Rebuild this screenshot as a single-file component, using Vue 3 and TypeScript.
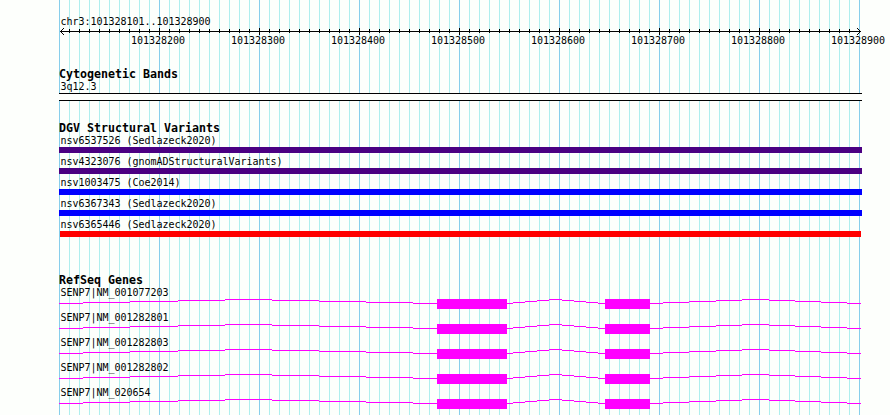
<script setup lang="ts">
interface Variant { label: string; color: string; short?: boolean }

const ticks: number[] = Array.from({ length: 79 }, (_, i) => 69 + i * 10)
const gridLines: number[] = Array.from({ length: 81 }, (_, i) => i)
const scaleLabels: string[] = Array.from({ length: 8 }, (_, i) => String(101328200 + i * 100))

const variants: Variant[] = [
  { label: 'nsv6537526 (Sedlazeck2020)', color: '#4b0082' },
  { label: 'nsv4323076 (gnomADStructuralVariants)', color: '#4b0082' },
  { label: 'nsv1003475 (Coe2014)', color: '#0000ff' },
  { label: 'nsv6367343 (Sedlazeck2020)', color: '#0000ff' },
  { label: 'nsv6365446 (Sedlazeck2020)', color: '#ff0000', short: true },
]

const genes: string[] = [
  'SENP7|NM_001077203',
  'SENP7|NM_001282801',
  'SENP7|NM_001282803',
  'SENP7|NM_001282802',
  'SENP7|NM_020654',
]

// Each intron climbs one pixel per step to its middle and back down.
const introns: number[][] = [
  [59, 83, 130, 178, 225, 272, 319, 366, 413, 437],
  [507, 513, 525, 537, 549, 562, 574, 586, 598, 605],
  [650, 663, 689, 716, 742, 769, 795, 821, 847, 861],
]
const intronPath: string = introns
  .flatMap((xs) => xs.slice(0, -1).map((x, i) => {
    const y = Math.abs(4 - i)
    return `M${x - 59} ${y}H${xs[i + 1] - 59}V${y + 1}H${x - 59}Z`
  }))
  .join('')

// Arrowheads: one pixel out from the axis for every pixel in from the tip.
const arrowPath: string = [1, 2, 3]
  .flatMap((d) => [60 + d, 860 - d].flatMap((x) => [3 - d, 3 + d].map((y) => `M${x} ${y}h1v1h-1z`)))
  .join('')
</script>

<template>
  <main class="browser">
    <svg class="grid" width="890" height="415" shape-rendering="crispEdges">
      <rect
        v-for="i in gridLines" :key="i" :x="49 + i * 10 + 10" y="0" width="1" height="415"
        :class="i % 10 === 0 ? 'major' : 'minor'"
      />
    </svg>

    <section class="scale">
      <p class="label">chr3:101328101..101328900</p>
      <svg class="axis" width="890" height="7" shape-rendering="crispEdges">
        <rect x="60" y="3" width="801" height="1" />
        <rect
          v-for="x in ticks" :key="x" :x="x" :y="(x - 59) % 100 ? 1 : 0" width="1"
          :height="(x - 59) % 100 ? 4 : 7"
        />
        <path :d="arrowPath" />
      </svg>
      <div class="numbers">
        <span v-for="n in scaleLabels" :key="n">{{ n }}</span>
      </div>
    </section>

    <section class="bands">
      <h2>Cytogenetic Bands</h2>
      <p class="label">3q12.3</p>
      <div class="band"></div>
    </section>

    <section class="variants">
      <h2>DGV Structural Variants</h2>
      <div v-for="v in variants" :key="v.label" class="variant">
        <p class="label">{{ v.label }}</p>
        <div class="bar" :class="{ short: v.short }" :style="{ background: v.color }"></div>
      </div>
    </section>

    <section class="genes">
      <h2>RefSeq Genes</h2>
      <div v-for="g in genes" :key="g" class="gene">
        <p class="label">{{ g }}</p>
        <svg class="model" width="803" height="10" shape-rendering="crispEdges">
          <path :d="intronPath" />
          <rect x="378" y="0" width="70" height="10" />
          <rect x="546" y="0" width="45" height="10" />
        </svg>
      </div>
    </section>
  </main>
</template>

<style>
body {
  background: #fdfffc;
}
</style>

<style scoped>
.browser {
  position: relative;
  width: 890px;
  height: 415px;
  overflow: hidden;
  color: #000;
  font-family: "DejaVu Sans Mono", monospace;
  font-size: 10px;
}
.grid {
  position: absolute;
  inset: 0;
}
.minor { fill: #afeeee; }
.major { fill: #87ceeb; }
section {
  position: relative;
  padding-left: 59px;
}
svg { display: block; }
p, h2 { margin: 0; white-space: pre; }
.label {
  height: 12px;
  padding-left: 1.4px;
  line-height: 12px;
  letter-spacing: -0.02px;
}
h2 {
  height: 13px;
  font-size: 11.63px;
  line-height: 13px;
  font-weight: 700;
}
.scale {
  height: 67px;
  padding-top: 16px;
  box-sizing: border-box;
}
.axis {
  margin-left: -59px;
}
.numbers {
  display: flex;
  width: 800px;
  margin-left: 49px;
  line-height: 12px;
  letter-spacing: -0.02px;
}
.numbers span {
  flex: none;
  width: 100px;
  text-align: center;
}
.bands {
  height: 54px;
  box-sizing: border-box;
  padding-top: 1px;
}
.band {
  box-sizing: border-box;
  width: 803px;
  height: 8px;
  border: solid #000;
  border-width: 1px 0;
  background: #fdfffc;
}
.variants {
  height: 152px;
  box-sizing: border-box;
  padding-top: 1px;
}
.variant {
  height: 21px;
}
.bar {
  width: 803px;
  height: 6px;
}
.bar.short {
  width: 801px;
  margin-left: 1px;
}
.genes { padding-top: 1px; }
.gene { height: 25px; }
.model { fill: #f0f; }
</style>
